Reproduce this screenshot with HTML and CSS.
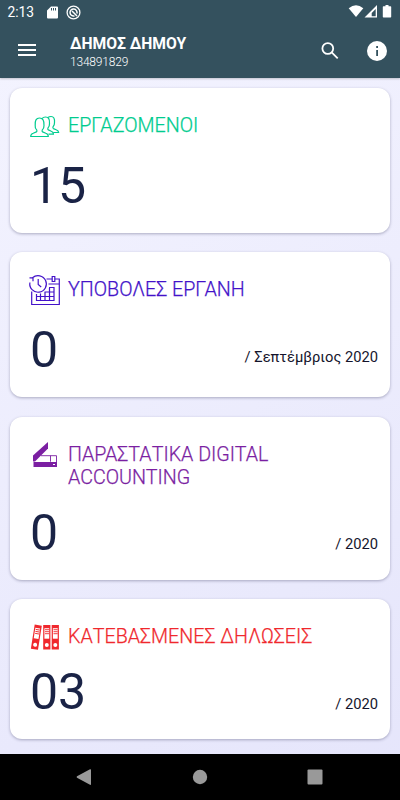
FILE: index.html
```html
<!DOCTYPE html>
<html lang="el">
<head>
  <meta charset="UTF-8">
  <meta name="viewport" content="width=device-width, initial-scale=1">
  <title>Dashboard</title>
  <link rel="stylesheet" href="styles.css">
</head>

<body>

  <!-- === Status bar and app header === -->
  <header>
    <div class="status-bar">
      <span class="clock">2:13</span>
      <svg class="sd-icon" width="11" height="13" viewBox="0 0 11 13">
        <path fill="#fff" fill-rule="evenodd" d="M4 .5h6q1 0 1 1v10q0 1-1 1H1q-1 0-1-1v-7zM4 2v2.5h1V2zm2 0v2.5h1V2zm2 0v2.5h1V2z"/>
      </svg>
      <svg class="sync-icon" width="15" height="15" viewBox="0 0 15 15" fill="none" stroke="#fff">
        <circle cx="7.5" cy="7.5" r="6.4" stroke-width="1.3"/>
        <path stroke-width="1.5" d="M10.9 8.5A3.5 3.5 0 1 0 8.5 10.9M6 6l5 5"/>
      </svg>
      <svg class="signal-icons" width="46" height="16" viewBox="0 0 46 16" fill="#fff">
        <path d="M.7 4.2Q8 -1.6 15.3 4.2L8 13z"/>
        <path fill-rule="evenodd" d="M29 1v12.5H16.5zM27.7 5l-4 4v3.3h4z"/>
        <path d="M37.5 1h3v1.3h2q.7 0 .7.7v9.8q0 .7-.7.7h-7q-.7 0-.7-.7V3q0-.7.7-.7h2z"/>
      </svg>
    </div>

    <div class="toolbar">
      <svg class="menu-icon" width="18" height="14" viewBox="0 0 18 14">
        <path fill="#fff" d="M0 0h18v2H0zm0 5h18v2H0zm0 5h18v2H0z"/>
      </svg>
      <div class="company">
        <div class="company-name">ΔΗΜΟΣ ΔΗΜΟΥ</div>
        <div class="company-id">134891829</div>
      </div>
      <svg class="search-icon" width="18" height="18" viewBox="0 0 18 18" fill="none" stroke="#fff" stroke-width="1.8">
        <circle cx="6.8" cy="6.5" r="5.4"/>
        <path d="M10.7 10.4l6 6"/>
      </svg>
      <svg class="info-icon" width="20" height="20" viewBox="0 0 20 20">
        <circle cx="10" cy="10" r="10" fill="#fff"/>
        <path fill="#34515e" d="M9.2 5H11v2H9.200zm0 4H11v6H9.200z"/>
      </svg>
    </div>
  </header>

  <!-- === Summary cards === -->
  <main>
    <section class="card employees">
      <div class="card-title">
        <svg width="30" height="30" viewBox="0 0 30 30" fill="none" stroke="currentColor" stroke-width="1.2" stroke-linejoin="round">
          <path d="M.7 25.5q0-2.500 2.500-3.300l3.200-1.300q.8-.5.4-1.800Q4.800 17 5.200 14.500 4.600 7 9.500 7t4.500 7.500q.2 2.500-1.800 4.600-.4 1.300.4 1.800l3.200 1.300q2.500.8 2.500 3.300z"/>
          <path d="M12 7.700Q13.300 6 15.500 6q4.500 0 4 6.500.2 2.500-1.600 4.600-.4 1.300.4 1.800l3 1.300q2.200.8 2.200 3h-5M18 6.500Q19.200 5.500 21 5.500q4 0 3.500 6 .2 2.300-1.500 4.300-.4 1.300.4 1.800l2.800 1.200q2.300.8 2.500 2.700h-5"/>
        </svg>
        <h2>ΕΡΓΑΖΟΜΕΝΟΙ</h2>
      </div>
      <div class="card-value">
        <span class="number">15</span>
      </div>
    </section>

    <section class="card submissions">
      <div class="card-title">
        <svg width="30" height="30" viewBox="0 0 30 30" fill="none" stroke="currentColor" stroke-width="1.2">
          <path d="M1.700 16.500v13h27.600V4h-4.300M22 4h-5.500M18.500 9h11M22.200 1.500h2.600v5h-2.600z"/>
          <path d="M6.500 19v6.500H24v-13h-5M6.500 21.500H24M14.500 17H24M10.500 18.500v7M15 17v8.500M19.500 13v12.500"/>
          <path d="M2.500 2.800A8.300 8.300 0 1 1 -.1 7.500M-.5 2.800h3.500v3.400M8.200 4v5.500l3 2.500"/>
        </svg>
        <h2>ΥΠΟΒΟΛΕΣ ΕΡΓΑΝΗ</h2>
      </div>
      <div class="card-value">
        <span class="number">0</span>
        <span class="period">/ Σεπτέμβριος 2020</span>
      </div>
    </section>

    <section class="card documents">
      <div class="card-title">
        <svg width="30" height="30" viewBox="0 0 30 30" fill="currentColor">
          <path d="M3 15.500L18 2v6.500L5 21.500H3z"/>
          <path fill-rule="evenodd" d="M3.500 22H27v5H3.500zM23 24v1h2v-1z"/>
          <path fill="none" stroke="currentColor" stroke-width=".9" d="M11 15.700h15.500v6.500M20.500 15.700v6"/>
        </svg>
        <h2>ΠΑΡΑΣΤΑΤΙΚΑ DIGITAL ACCOUNTING</h2>
      </div>
      <div class="card-value">
        <span class="number">0</span>
        <span class="period">/ 2020</span>
      </div>
    </section>

    <section class="card declarations">
      <div class="card-title">
        <svg width="30" height="30" viewBox="0 0 30 30">
          <defs>
            <g id="binder">
              <path fill="currentColor" d="M0 0h7.200v24.500H0z"/>
              <path fill="#fff" d="M1.200 3.200h4.800v10.500H1.200z"/>
              <path stroke="currentColor" stroke-width=".9" d="M1.800 4.700H6M1.800 6.700H6M1.800 8.700H6"/>
              <circle cx="3.600" cy="20" r="2" fill="#fff"/>
            </g>
          </defs>
          <use href="#binder" transform="translate(4.700 2.500) rotate(9)"/>
          <use href="#binder" transform="translate(13.200 3)"/>
          <use href="#binder" transform="translate(21.700 3)"/>
        </svg>
        <h2>ΚΑΤΕΒΑΣΜΕΝΕΣ ΔΗΛΩΣΕΙΣ</h2>
      </div>
      <div class="card-value">
        <span class="number">03</span>
        <span class="period">/ 2020</span>
      </div>
    </section>
  </main>

  <!-- === System navigation === -->
  <nav>
    <svg width="16" height="16" viewBox="0 0 16 16"><path d="M1 7.300L14 .2q1-.3 1 .6v14.400q0 .9-1 .6L1 8.700q-.8-.7 0-1.400z"/></svg>
    <svg width="16" height="16" viewBox="0 0 16 16"><circle cx="8" cy="8" r="7.200"/></svg>
    <svg width="16" height="16" viewBox="0 0 16 16"><rect x=".5" y=".5" width="15" height="15" rx="1"/></svg>
  </nav>

</body>
</html>
```

FILE: styles.css
```css
/* Base styling */
* {
  box-sizing: border-box;
}

body {
  margin: 0;
  height: 800px;
  overflow: hidden;
  display: flex;
  flex-direction: column;
  font-family: Roboto, sans-serif;
  background: linear-gradient(150deg, #f4f4ff, #e5e5fb);
}

svg {
  display: block;
  flex: none;
  overflow: visible;
}

/* Header */
header {
  height: 77.5px;
  flex: none;
  background-color: #34515e;
  color: white;
  box-shadow: 0 1px 2px rgba(0,0,0,0.2);
}

.status-bar {
  height: 24px;
  padding: 0 6px 0 7.5px;
  display: flex;
  align-items: center;
}

.clock {
  width: 39px;
  font-size: 13.8px;
}

.sync-icon {
  margin-left: 8px;
}

.signal-icons {
  margin-left: auto;
}

.toolbar {
  height: 53px;
  padding: 0 13.5px 0 18px;
  display: flex;
  align-items: center;
}

.company {
  margin-left: 34px;
  margin-top: 3px;
  flex: 1;
}

.company-name {
  font-size: 15.7px;
  font-weight: 700;
  line-height: 19px;
}

.company-id {
  font-size: 12px;
  font-weight: 300;
  line-height: 18px;
  letter-spacing: -0.2px;
}

.info-icon {
  margin-left: 28px;
}

/* Cards */
main {
  flex: 1;
  padding: 10px;
  display: flex;
  flex-direction: column;
  gap: 19.5px;
}

.card {
  height: 145px;
  padding: 23px 12px 0 20px;
  background-color: white;
  border-radius: 12px;
  box-shadow: 0 1px 3px rgba(40,40,80,0.35);
}

.card-title {
  display: flex;
  gap: 8px;
}

.card-title h2 {
  margin: 3px 0 0;
  font-size: 19.7px;
  font-weight: 300;
  line-height: 23px;
  -webkit-text-stroke: 0.25px currentColor;
}

.card-value {
  display: flex;
  justify-content: space-between;
  color: #1a2346;
}

.number {
  font-size: 50px;
  line-height: 60px;
  margin-top: 15px;
}

.period {
  font-size: 14.7px;
  line-height: 20px;
  margin-top: 42px;
  color: #14142b;
}

.employees {
  color: #00cc8f;
}

.submissions {
  color: #4312c9;
}

.documents {
  height: 163px;
  color: #7b1fa2;
}

.documents .number {
  margin-top: 14px;
}

.documents .period {
  margin-top: 45px;
}

.declarations {
  height: 140px;
  color: #f0282d;
}

.declarations .number {
  margin-top: 10px;
}

/* Bottom navigation */
nav {
  height: 46.5px;
  flex: none;
  padding: 0 77px 0 76px;
  display: flex;
  justify-content: space-between;
  align-items: center;
  background-color: black;
  fill: #999;
}
```
